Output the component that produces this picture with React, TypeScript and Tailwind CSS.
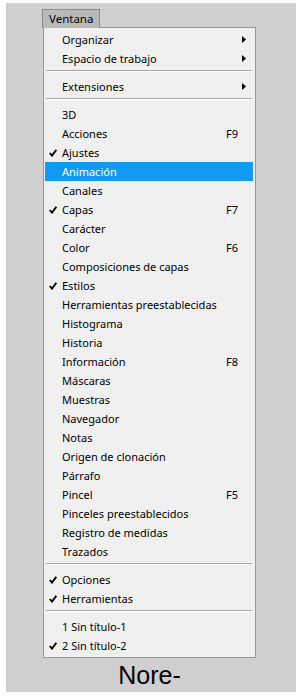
type Item =
  | { kind: "item"; label: string; checked?: boolean; shortcut?: string; submenu?: boolean; active?: boolean }
  | { kind: "sep" };

const ITEMS: Item[] = [
  { kind: "item", label: "Organizar", submenu: true },
  { kind: "item", label: "Espacio de trabajo", submenu: true },
  { kind: "sep" },
  { kind: "item", label: "Extensiones", submenu: true },
  { kind: "sep" },
  { kind: "item", label: "3D" },
  { kind: "item", label: "Acciones", shortcut: "F9" },
  { kind: "item", label: "Ajustes", checked: true },
  { kind: "item", label: "Animación", active: true },
  { kind: "item", label: "Canales" },
  { kind: "item", label: "Capas", checked: true, shortcut: "F7" },
  { kind: "item", label: "Carácter" },
  { kind: "item", label: "Color", shortcut: "F6" },
  { kind: "item", label: "Composiciones de capas" },
  { kind: "item", label: "Estilos", checked: true },
  { kind: "item", label: "Herramientas preestablecidas" },
  { kind: "item", label: "Histograma" },
  { kind: "item", label: "Historia" },
  { kind: "item", label: "Información", shortcut: "F8" },
  { kind: "item", label: "Máscaras" },
  { kind: "item", label: "Muestras" },
  { kind: "item", label: "Navegador" },
  { kind: "item", label: "Notas" },
  { kind: "item", label: "Origen de clonación" },
  { kind: "item", label: "Párrafo" },
  { kind: "item", label: "Pincel", shortcut: "F5" },
  { kind: "item", label: "Pinceles preestablecidos" },
  { kind: "item", label: "Registro de medidas" },
  { kind: "item", label: "Trazados" },
  { kind: "sep" },
  { kind: "item", label: "Opciones", checked: true },
  { kind: "item", label: "Herramientas", checked: true },
  { kind: "sep" },
  { kind: "item", label: "1 Sin título-1" },
  { kind: "item", label: "2 Sin título-2", checked: true },
];

function CheckMark() {
  return (
    <svg width="8" height="8" viewBox="0 0 8 8" className="block">
      <path d="M0.8 4 L3 6.6 L7.3 0.8" fill="none" stroke="#000" strokeWidth="1.9" />
    </svg>
  );
}

function SubArrow() {
  return (
    <svg width="4" height="7" viewBox="0 0 4 7" className="block">
      <path d="M0 0 L4 3.5 L0 7 Z" fill="#000" />
    </svg>
  );
}

function MenuRow({ item }: { item: Extract<Item, { kind: "item" }> }) {
  const rowClass = item.active
    ? "flex items-center h-[19px] ml-[1px] mr-[2px] bg-[#1299f3] text-white"
    : "flex items-center h-[19px] ml-[1px] mr-[2px] text-black";

  return (
    <div className={rowClass}>
      <div className="w-[17px] shrink-0 flex justify-start pl-[4px]">{item.checked && <CheckMark />}</div>
      <div className="flex-1 min-w-0 whitespace-nowrap">{item.label}</div>
      <div className="w-[27px] shrink-0 flex items-center">
        {item.shortcut && <span>{item.shortcut}</span>}
        {item.submenu && (
          <span className="pl-[16px]">
            <SubArrow />
          </span>
        )}
      </div>
    </div>
  );
}

export default function App() {
  return (
    <div className="w-[306px] h-[699px] bg-white pt-[3px] pl-[6px]">
      <div className="w-[290px] h-[689px] bg-[#cfcfcf] pt-[6px] pl-[36px] flex flex-col items-start">
        <div className="h-[19px] w-[58px] -mb-[1px] relative z-10 bg-[#b9b9b9] border border-[#8c8c8c] border-b-0 flex items-center pl-[6px] text-[11.5px] text-black font-['Noto_Sans',sans-serif]">
          Ventana
        </div>
        <div className="ml-[1px] w-[213px] bg-[#f0f0f0] border border-[#979797] pt-[2px] pb-[2px] text-[11px] leading-[19px] font-['Noto_Sans',sans-serif]">
          {ITEMS.map((item, i) =>
            item.kind === "sep" ? (
              <div key={i} className="h-[9px] pt-[2px] pl-[2px] pr-[3px]">
                <div className="h-[1px] bg-[#a7a7a7]" />
                <div className="h-[1px] bg-white" />
              </div>
            ) : (
              <MenuRow key={i} item={item} />
            )
          )}
        </div>
        <div className="w-[213px] ml-[1px] mt-[2px] text-center text-[25px] leading-[30px] text-black font-['Liberation_Sans',Arial,sans-serif]">
          Nore-
        </div>
      </div>
    </div>
  );
}
